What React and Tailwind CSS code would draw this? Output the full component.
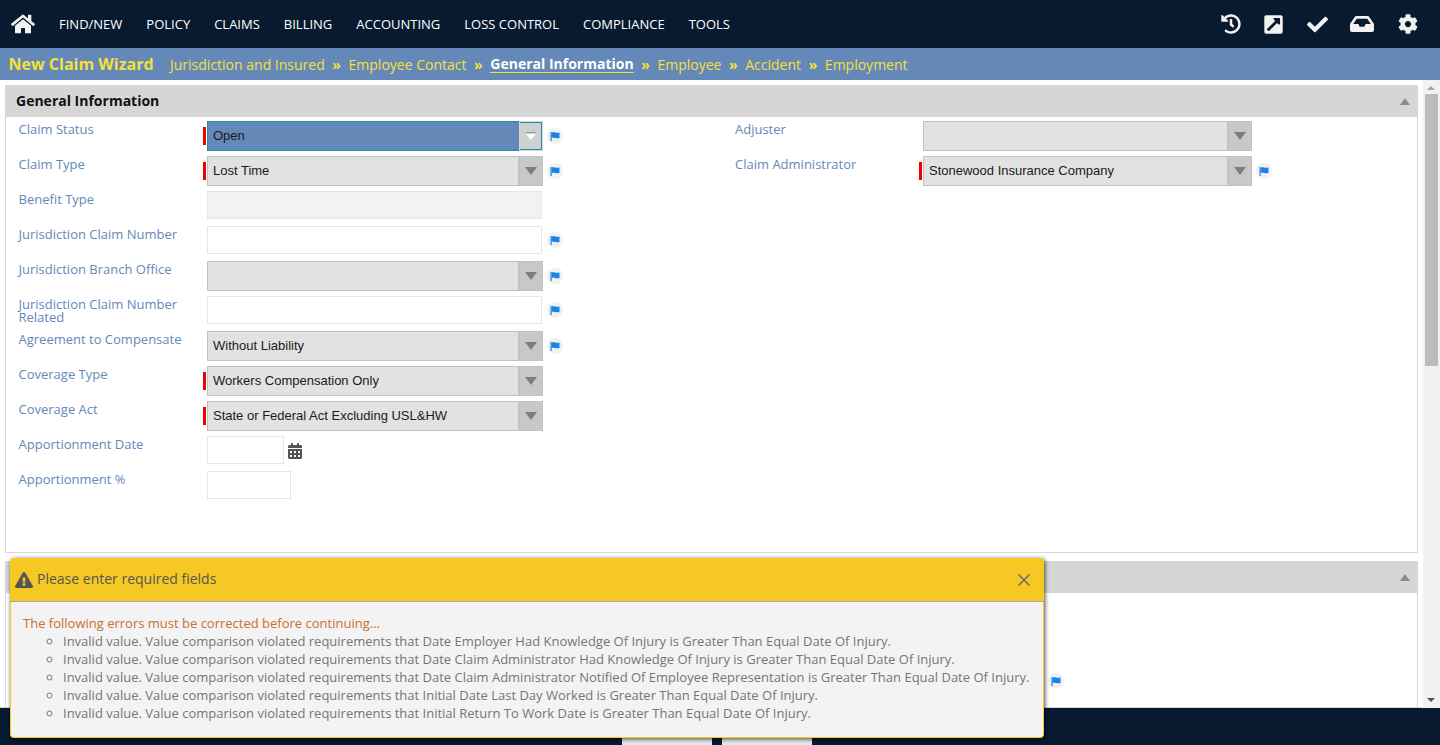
import { FaHome, FaHistory, FaExternalLinkSquareAlt, FaCheck, FaInbox, FaCog, FaCalendarAlt, FaExclamationTriangle } from 'react-icons/fa'

const NAV = ['FIND/NEW', 'POLICY', 'CLAIMS', 'BILLING', 'ACCOUNTING', 'LOSS CONTROL', 'COMPLIANCE', 'TOOLS']
const STEPS = ['Jurisdiction and Insured', 'Employee Contact', 'General Information', 'Employee', 'Accident', 'Employment']
const ERRORS = [
  'Invalid value. Value comparison violated requirements that Date Employer Had Knowledge Of Injury is Greater Than Equal Date Of Injury.',
  'Invalid value. Value comparison violated requirements that Date Claim Administrator Had Knowledge Of Injury is Greater Than Equal Date Of Injury.',
  'Invalid value. Value comparison violated requirements that Date Claim Administrator Notified Of Employee Representation is Greater Than Equal Date Of Injury.',
  'Invalid value. Value comparison violated requirements that Initial Date Last Day Worked is Greater Than Equal Date Of Injury.',
  'Invalid value. Value comparison violated requirements that Initial Return To Work Date is Greater Than Equal Date Of Injury.',
]

function Flag() {
  return (
    <span className="flex h-[16px] w-[16px] shrink-0 items-center justify-center rounded-full bg-[#f1f1f1] text-[#1a82e8]">
      <svg width="10" height="10" viewBox="0 0 10 10" fill="currentColor">
        <rect x="0.5" y="1" width="1.2" height="9" />
        <path d="M1.7 1.4C4 0.4 6 2.6 9.5 1.4V7C6 8.2 4 6 1.7 7Z" />
      </svg>
    </span>
  )
}

function Required({ on }) {
  return <span className={`mr-[1px] h-[18px] w-[3px] shrink-0 ${on ? 'bg-[#f00000]' : ''}`} />
}

function Select({ value, required, focused, flag, width = 'w-[336px]' }) {
  return (
    <div className="flex h-[30px] items-center">
      <Required on={required} />
      <div className={`flex h-[30px] ${width} items-stretch font-['Liberation_Sans',Arial,sans-serif] text-[13px] text-[#1a1a1a]`}>
        <div className={`flex flex-1 items-center border pl-[5px] ${focused ? 'border-r-0 border-[#1b93ad] bg-[#6488b8]' : 'border-[#c2c2c2] bg-[#e2e2e2]'}`}>{value}</div>
        <div className={`flex w-[24px] items-center justify-center border ${focused ? 'border-[#d6d6d6] bg-[#cfcfcf] shadow-[inset_-1px_1px_0_#1b93ad,inset_0_-1px_0_#1b93ad]' : 'border-[#c2c2c2] bg-[#c8c8c8]'}`}>
          {focused ? (
            <span className="flex flex-col items-center">
              <span className="mb-[1px] h-[1px] w-[10px] bg-[#7fa9a9]" />
              <span className="h-0 w-0 border-x-[5px] border-t-[6px] border-x-transparent border-t-white" />
            </span>
          ) : (
            <span className="h-0 w-0 border-x-[6px] border-t-[8px] border-x-transparent border-t-[#7d7d7d]" />
          )}
        </div>
      </div>
      {flag && <span className="ml-[4px]"><Flag /></span>}
    </div>
  )
}

function TextBox({ flag, disabled, width = 'w-[335px]' }) {
  return (
    <div className="flex h-[28px] items-center">
      <span className="w-[4px] shrink-0" />
      <div className={`h-[28px] ${width} border border-[#e6e6e6] ${disabled ? 'bg-[#f2f2f2]' : 'bg-white'}`} />
      {flag && <span className="ml-[5px]"><Flag /></span>}
    </div>
  )
}

function Row({ label, labelWidth = 'w-[184.5px]', children }) {
  return (
    <div className="flex h-[35px] items-start">
      <div className={`${labelWidth} shrink-0 pt-[2px] text-[13px] leading-[13px] text-[#6488b8]`}>{label}</div>
      {children}
    </div>
  )
}

function PanelHeader({ title }) {
  return (
    <div className="flex h-[32px] items-center justify-between bg-[#d6d6d6] pl-[10px] pr-[7px]">
      <span className="mb-[2px] text-[14px] font-bold text-[#111]">{title}</span>
      <span className="h-0 w-0 border-x-[5px] border-b-[7px] border-x-transparent border-b-[#8c8c8c]" />
    </div>
  )
}

export default function App() {
  return (
    <div className="relative flex h-[745px] flex-col overflow-hidden bg-white font-['Open_Sans',sans-serif]">
      <header className="flex h-[48px] shrink-0 items-center bg-[#081a30] text-white">
        <FaHome size={24} className="ml-[11px] text-[#f2f2f2]" />
        <nav className="ml-[24px] mt-[1px] flex gap-[24px] text-[13px]">
          {NAV.map(item => <span key={item}>{item}</span>)}
        </nav>
        <div className="ml-auto mr-[22px] flex items-center text-[#f2f2f2]">
          <FaHistory size={20} />
          <FaExternalLinkSquareAlt size={21} className="ml-[22px]" />
          <FaCheck size={21} className="ml-[23px]" />
          <FaInbox size={24} className="ml-[22px]" />
          <FaCog size={20} className="ml-[24px]" />
        </div>
      </header>

      <div className="flex h-[32px] shrink-0 items-center bg-[#6488b8] pl-[8.5px]">
        <span className="text-[16px] font-bold text-[#f6e03a]">New Claim Wizard</span>
        <div className="ml-[16.5px] flex items-center text-[14px] text-[#f6e03a]">
          {STEPS.map((step, i) => (
            <span key={step} className="flex items-center">
              {i > 0 && <span className="mx-[7.6px] font-bold">»</span>}
              {step === 'General Information'
                ? <span className="border-b border-[#f6e03a] font-bold leading-[17px] text-white">{step}</span>
                : <span>{step}</span>}
            </span>
          ))}
        </div>
      </div>

      <div className="flex min-h-0 flex-1">
        <main className="min-w-0 flex-1 overflow-hidden border-b border-[#d6d6d6] pl-[5px] pr-[4px] pt-[5px]">
          <section className="h-[468px] border border-t-0 border-[#d6d6d6]">
            <PanelHeader title="General Information" />
            <div className="flex pl-[12.5px] pt-[4px]">
              <div className="w-[716.5px] shrink-0">
                <Row label="Claim Status"><Select value="Open" required focused flag /></Row>
                <Row label="Claim Type"><Select value="Lost Time" required flag /></Row>
                <Row label="Benefit Type"><TextBox disabled /></Row>
                <Row label="Jurisdiction Claim Number"><TextBox flag /></Row>
                <Row label="Jurisdiction Branch Office"><Select value="" flag /></Row>
                <Row label={<>Jurisdiction Claim Number<br />Related</>}><TextBox flag /></Row>
                <Row label="Agreement to Compensate"><Select value="Without Liability" flag /></Row>
                <Row label="Coverage Type"><Select value="Workers Compensation Only" required /></Row>
                <Row label="Coverage Act"><Select value="State or Federal Act Excluding USL&HW" required /></Row>
                <Row label="Apportionment Date">
                  <div className="flex h-[28px] items-center">
                    <TextBox width="w-[77px]" />
                    <FaCalendarAlt size={16} className="ml-[3px] mt-[2px] text-[#555]" />
                  </div>
                </Row>
                <Row label="Apportionment %"><TextBox width="w-[84px]" /></Row>
              </div>
              <div>
                <Row label="Adjuster" labelWidth="w-[184px]"><Select value="" width="w-[329px]" /></Row>
                <Row label="Claim Administrator" labelWidth="w-[184px]"><Select value="Stonewood Insurance Company" required flag width="w-[329px]" /></Row>
              </div>
            </div>
          </section>

          <section className="mt-[8px] h-[200px] border border-t-0 border-[#d6d6d6]">
            <PanelHeader title="" />
            <div className="flex h-[88px] justify-start pl-[1042px] pt-[80px]">
              <Flag />
            </div>
          </section>
        </main>

        {/* scrollbar */}
        <div className="flex w-[18px] shrink-0 flex-col items-center border-l border-white bg-[#f1f1f1] pr-[1px] pt-[6px]">
          <span className="h-0 w-0 border-x-[4px] border-b-[4px] border-x-transparent border-b-[#a3a3a3]" />
          <div className="mt-[4px] h-[272px] w-[13px] bg-[#bcbcbc]" />
          <span className="mb-[6px] mt-auto h-0 w-0 border-x-[4px] border-t-[4px] border-x-transparent border-t-[#505050]" />
        </div>
      </div>

      <footer className="flex h-[37px] shrink-0 justify-center gap-[10px] bg-[#081a30] pr-[6px] pt-[29px]">
        <div className="h-[8px] w-[90px] bg-[#e6e6e6]" />
        <div className="h-[8px] w-[90px] bg-[#e6e6e6]" />
      </footer>

      {/* validation dialog */}
      <div className="absolute left-[10px] top-[558px] h-[180px] w-[1034px] rounded-[4px] shadow-[1px_1px_4px_rgba(0,0,0,0.7)]">
        <div className="flex h-[44px] items-center justify-between rounded-t-[4px] border-b border-[#a9a9a9] bg-[#f6c823] pl-[5px] pr-[13px]">
          <div className="flex items-center gap-[4px] text-[14px] text-[#555]">
            <FaExclamationTriangle size={18} />
            <span className="mb-[2px]">Please enter required fields</span>
          </div>
          <svg width="14" height="14" viewBox="0 0 14 14" className="mt-[1px] text-[#6f7070]">
            <path d="M1.5 1.5L12.5 12.5M12.5 1.5L1.5 12.5" stroke="currentColor" strokeWidth="1.6" />
          </svg>
        </div>
        <div className="h-[136px] rounded-b-[4px] border border-t-0 border-[#f6c823] bg-[#f3f3f3] pl-[12px] pt-[12px] text-[13px] leading-[18px]">
          <p className="text-[#c96f2f]">The following errors must be corrected before continuing...</p>
          <ul className="ml-[40px] list-[circle] text-[#757575]">
            {ERRORS.map(err => <li key={err}>{err}</li>)}
          </ul>
        </div>
      </div>
    </div>
  )
}
